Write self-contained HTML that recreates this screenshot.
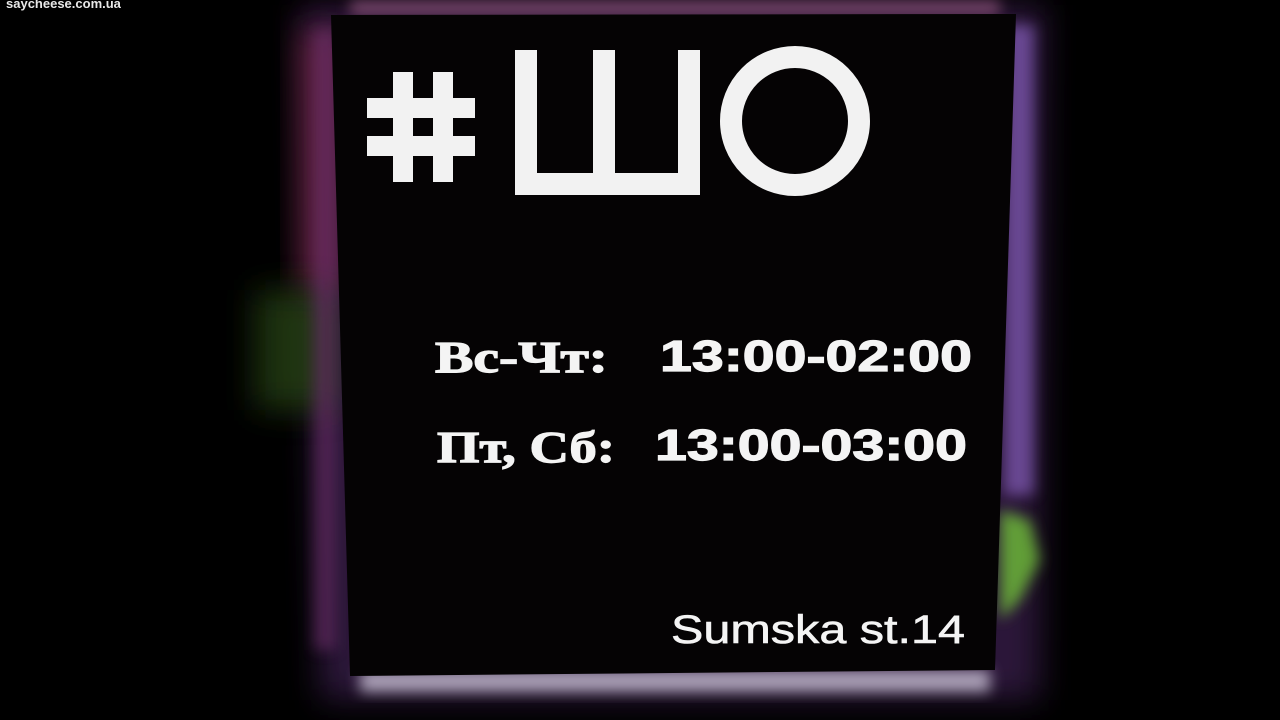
<!DOCTYPE html>
<html><head><meta charset="utf-8"><style>
html,body{margin:0;padding:0;background:#000;width:1280px;height:720px;overflow:hidden}
svg{display:block}
</style></head><body>
<svg width="1280" height="720" viewBox="0 0 1280 720" xmlns="http://www.w3.org/2000/svg">
<defs>
<filter id="b1" x="-50%" y="-50%" width="200%" height="200%"><feGaussianBlur stdDeviation="16"/></filter>
<filter id="b2" x="-50%" y="-50%" width="200%" height="200%"><feGaussianBlur stdDeviation="7"/></filter>
</defs>
<rect width="1280" height="720" fill="#000"/>
<!-- glow -->
<polygon points="300,5 1045,5 1040,700 320,700" fill="#4a2860" filter="url(#b1)" opacity="0.6"/>
<rect x="300" y="30" width="40" height="260" fill="#8a2a48" filter="url(#b1)" opacity="0.6"/>
<rect x="255" y="290" width="80" height="120" fill="#2a4a18" filter="url(#b1)" opacity="0.7"/>
<path d="M1000,510 L1030,520 L1040,560 L1020,600 L1000,620 Z" fill="#70c038" filter="url(#b2)" opacity="0.8"/>
<rect x="1004" y="25" width="30" height="470" fill="#7e58b0" filter="url(#b2)" opacity="0.75"/>
<rect x="314" y="30" width="22" height="620" fill="#6a2e68" filter="url(#b2)" opacity="0.6"/>
<rect x="360" y="670" width="630" height="22" fill="#d8d0e4" filter="url(#b2)" opacity="0.75"/>
<rect x="350" y="0" width="650" height="16" fill="#b06898" filter="url(#b2)" opacity="0.6"/>
<!-- sign -->
<polygon points="331,15 1016,14 995,670 350,676" fill="#050304"/>
<g fill="#f2f2f2">
<rect x="393" y="72" width="20" height="110"/>
<rect x="433" y="72" width="20" height="110"/>
<rect x="367" y="98" width="108" height="20"/>
<rect x="367" y="136" width="108" height="20"/>
<rect x="515" y="50" width="22" height="145"/>
<rect x="593" y="50" width="22" height="145"/>
<rect x="678" y="50" width="22" height="145"/>
<rect x="515" y="173" width="185" height="22"/>
</g>
<circle cx="795" cy="121" r="64" fill="none" stroke="#f2f2f2" stroke-width="22"/>
<g fill="#f4f4f4" font-weight="bold" stroke="#f4f4f4" stroke-width="1.2">
<text x="435" y="372" font-family="Liberation Serif, serif" font-size="44" textLength="173" lengthAdjust="spacingAndGlyphs">Вс-Чт:</text>
<text x="660" y="371" font-family="Liberation Sans, sans-serif" font-size="44" textLength="312" lengthAdjust="spacingAndGlyphs">13:00-02:00</text>
<text x="437" y="462" font-family="Liberation Serif, serif" font-size="44" textLength="178" lengthAdjust="spacingAndGlyphs">Пт, Сб:</text>
<text x="655" y="460" font-family="Liberation Sans, sans-serif" font-size="44" textLength="312" lengthAdjust="spacingAndGlyphs">13:00-03:00</text>
</g>
<text x="671" y="643" fill="#f4f4f4" stroke="#f4f4f4" stroke-width="0.6" font-family="Liberation Sans, sans-serif" font-size="40" textLength="294" lengthAdjust="spacingAndGlyphs">Sumska st.14</text>
<text x="6" y="8" fill="#e8e8e8" font-family="Liberation Sans, sans-serif" font-weight="bold" font-size="13">saycheese.com.ua</text>
</svg>
</body></html>
